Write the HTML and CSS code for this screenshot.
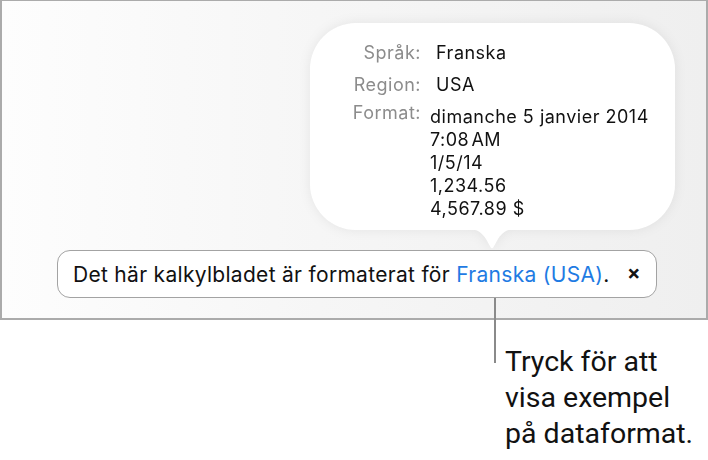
FILE: index.html
```html
<!DOCTYPE html>
<html lang="sv">
<head>
<meta charset="utf-8">
<title>Formatinformation</title>
<link rel="stylesheet" href="styles.css">
</head>
<body>
<div class="frame">
  <div class="bubble-wrap">
    <div class="bubble">
      <div class="info">
        <div class="label">Språk:</div>
        <div class="value">Franska</div>
        <div class="label">Region:</div>
        <div class="value">USA</div>
        <div class="label label-format">Format:</div>
        <div class="value value-format">
          <div>dimanche 5 janvier 2014</div>
          <div>7:08&#8202;AM</div>
          <div>1/5/14</div>
          <div>1,234.56</div>
          <div>4,567.89 $</div>
        </div>
      </div>
      <svg class="tail" width="48" height="21" viewBox="0 0 48 21" aria-hidden="true">
        <path d="M0 0 C10 0 14 4 18 10 L22.5 18 Q24 20.5 25.5 18 L30 10 C34 4 38 0 48 0 Z" fill="#ffffff"/>
      </svg>
    </div>
  </div>
  <div class="banner">
    <span class="msg">Det här kalkylbladet är formaterat för <span class="link">Franska (USA)</span>.</span>
    <span class="close">&#x2715;</span>
    <span class="leader"></span>
  </div>
</div>
<div class="callout">Tryck för att<br>visa exempel<br>på dataformat.</div>
</body>
</html>
```
FILE: styles.css
```css
html, body {
  margin: 0;
  padding: 0;
  background: #ffffff;
}
body {
  font-family: Inter, Roboto, "Liberation Sans", sans-serif;
  color: #111111;
  width: 708px;
  height: 460px;
  overflow: hidden;
}
.frame {
  box-sizing: border-box;
  width: 708px;
  height: 320px;
  border: 2px solid #ababab;
  border-top-width: 1px;
  background: linear-gradient(90deg, #fdfdfd 0%, #f6f6f6 45%, #efefef 100%);
  padding-top: 22px;
  display: flex;
  flex-direction: column;
}
.bubble-wrap {
  margin-left: 308px;
  width: 365px;
  filter: drop-shadow(0 0 6px rgba(0, 0, 0, 0.07));
}
.bubble {
  position: relative;
  box-sizing: border-box;
  width: 365px;
  height: 207px;
  background: #ffffff;
  border-radius: 46px;
  padding-top: 18px;
}
.info {
  display: grid;
  grid-template-columns: 111px auto;
  column-gap: 15px;
  row-gap: 9px;
  font-size: 18px;
  line-height: 23px;
  letter-spacing: 0.5px;
}
.label {
  text-align: right;
  color: #8c8c8c;
}
.label-format {
  margin-top: -4px;
}
.value {
  color: #111111;
}
.value-format {
  margin-left: -6px;
}
.tail {
  position: absolute;
  left: 158px;
  top: 206px;
  display: block;
}
.banner {
  position: relative;
  box-sizing: border-box;
  margin-left: 55px;
  margin-top: 20px;
  width: 600px;
  height: 48px;
  background: #ffffff;
  border: 1px solid #a3a3a3;
  border-radius: 13px;
  display: flex;
  align-items: center;
  justify-content: space-between;
  padding: 0 16px 0 15px;
  font-size: 21px;
  letter-spacing: 0.3px;
}
.link {
  color: #1f7be3;
}
.close {
  font-size: 15px;
  font-weight: 700;
  color: #111111;
  font-family: "DejaVu Sans", sans-serif;
  -webkit-text-stroke: 1px #111111;
  letter-spacing: 0;
}
.leader {
  position: absolute;
  left: 436px;
  top: 47px;
  width: 2px;
  height: 65px;
  background: #8a8a8a;
}
.callout {
  margin-top: 24px;
  padding-left: 505px;
  font-family: Roboto, "Liberation Sans", sans-serif;
  font-size: 28.5px;
  line-height: 36px;
  color: #111111;
}
```
